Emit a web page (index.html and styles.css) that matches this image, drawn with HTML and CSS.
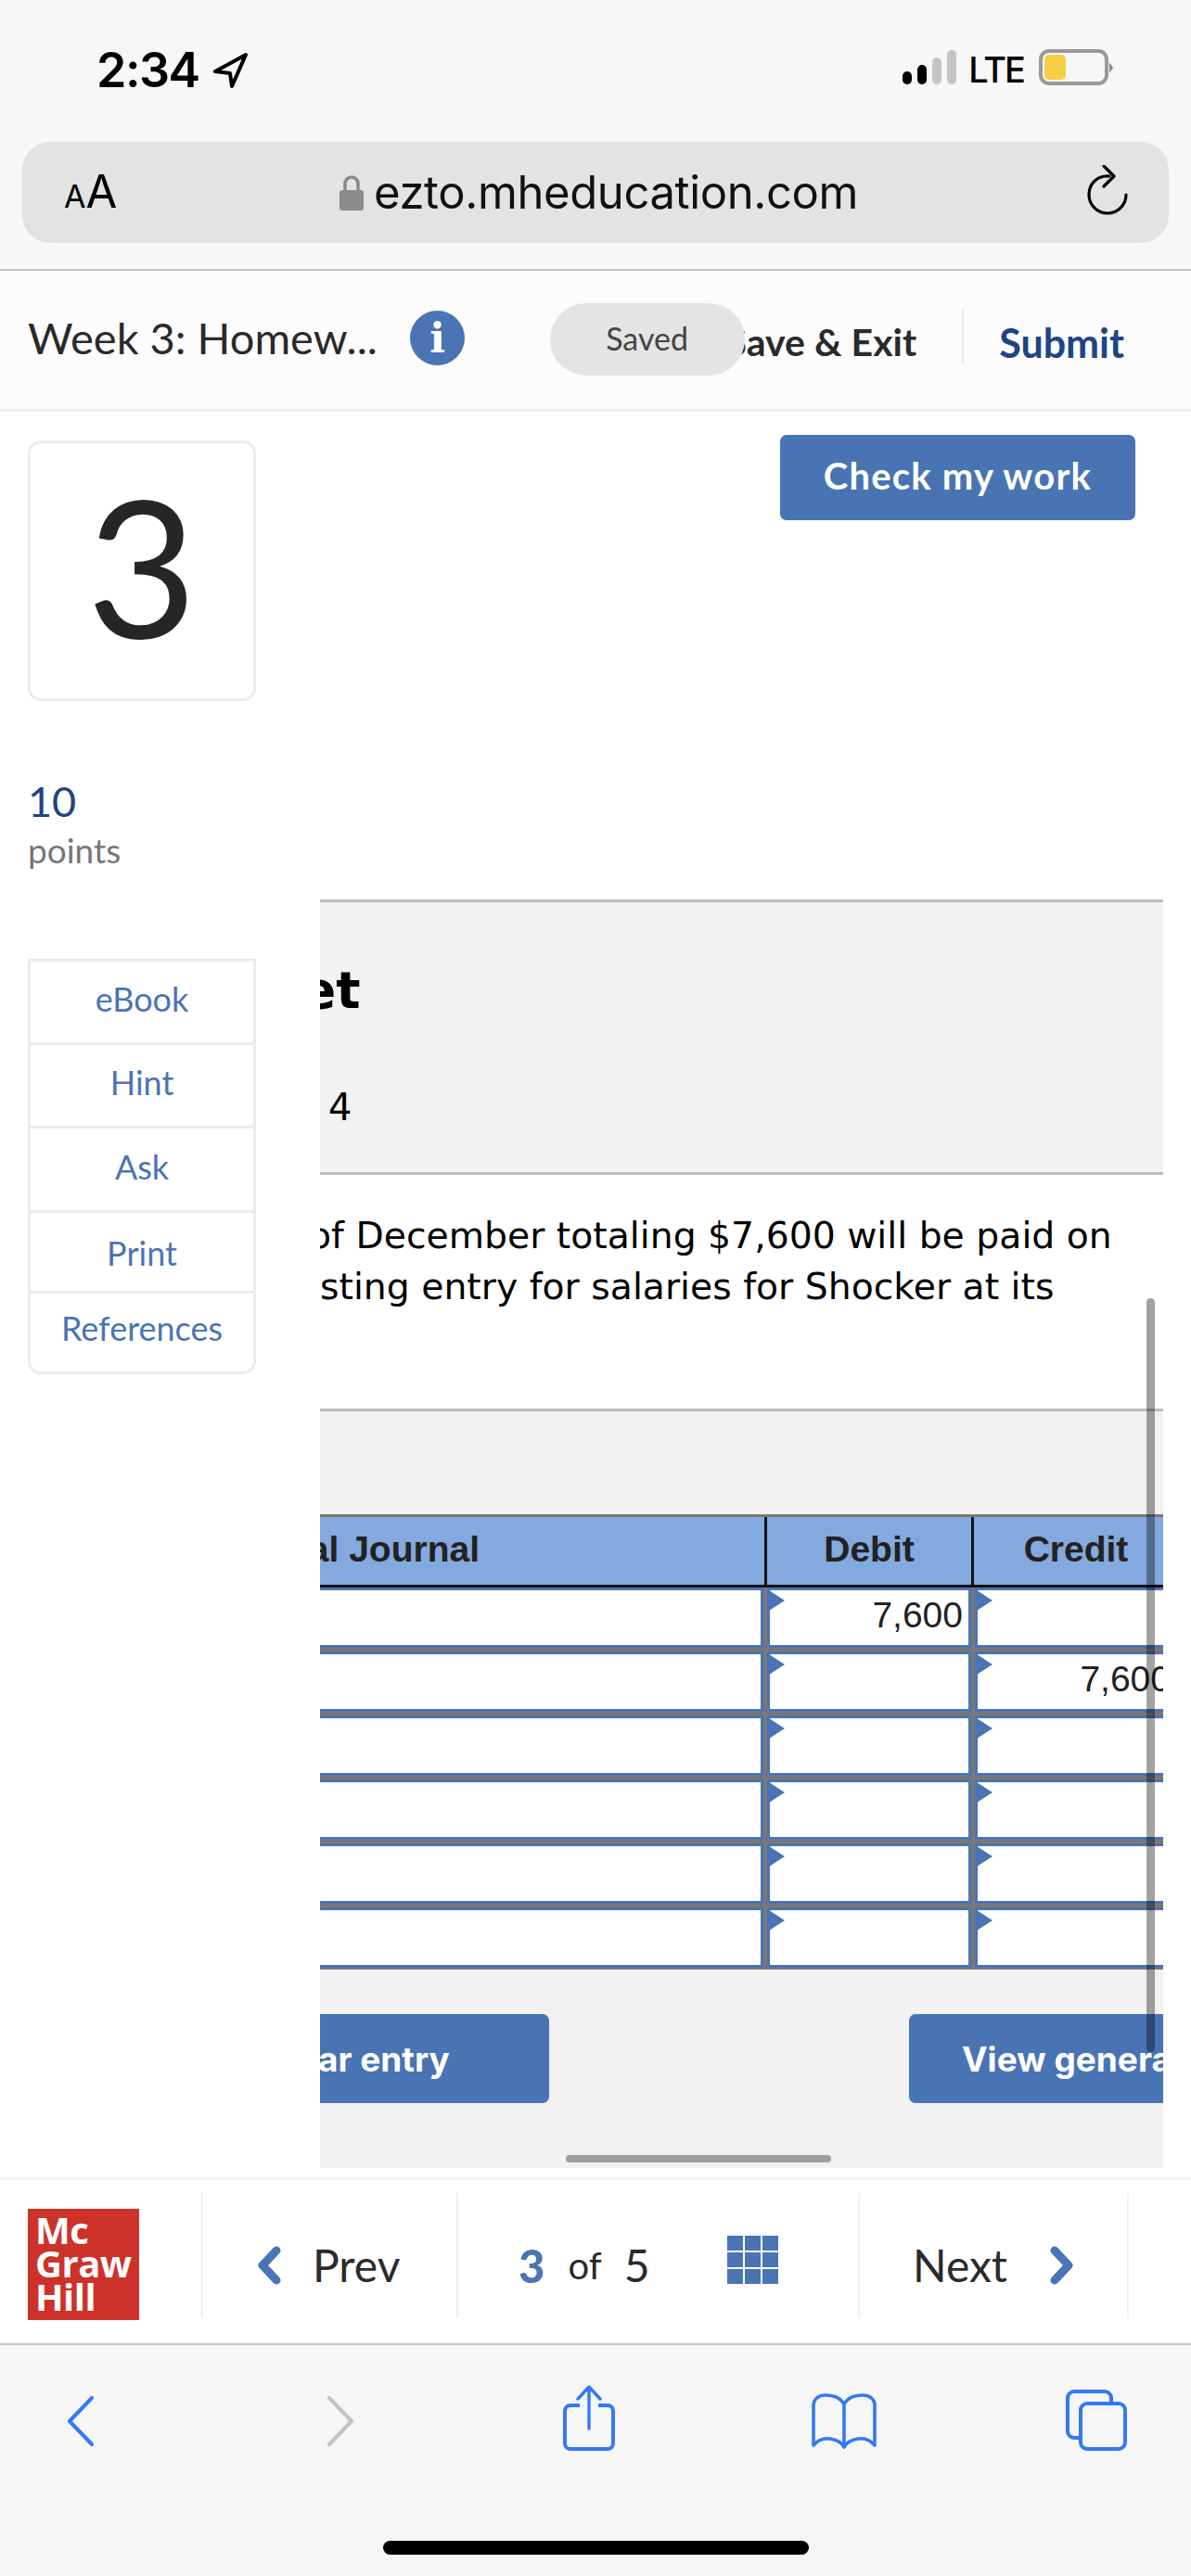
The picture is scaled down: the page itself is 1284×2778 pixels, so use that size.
FILE: index.html
```html
<!DOCTYPE html>
<html lang="en">
  <head>
    <meta charset="UTF-8" />
    <meta name="viewport" content="width=device-width, initial-scale=1.0" />
    <title>Week 3: Homework</title>
    <link rel="stylesheet" href="styles.css">
  </head>
  <body>
    <!-- Safari top -->
    <div class="browser-top">
      <div class="status-bar">
        <div class="clock">
          <span>2:34</span>
          <svg class="arrow" viewBox="0 0 40 40"><path d="M36 3 L3 21 L19 23 L21 37 Z" fill="none" stroke="#000" stroke-width="4" stroke-linejoin="round"/></svg>
        </div>
        <div class="status-right">
          <div class="signal">
            <i class="bar bar-on h1"></i>
            <i class="bar bar-on h2"></i>
            <i class="bar h3"></i>
            <i class="bar h4"></i>
          </div>
          <span class="lte">LTE</span>
          <div class="battery"><i class="battery-fill"></i></div>
          <i class="battery-nub"></i>
        </div>
      </div>
      <div class="address-bar">
        <span class="aa"><small>A</small>A</span>
        <div class="url">
          <svg class="lock" viewBox="0 0 26 38"><path d="M6 18 V9 a7 7 0 0 1 14 0 V18" fill="none" stroke="#8a8a8c" stroke-width="3.5"/><rect x="0" y="16" width="26" height="22" rx="3" fill="#8a8a8c"/></svg>
          <span>ezto.mheducation.com</span>
        </div>
        <svg class="reload" viewBox="0 0 44 54"><path d="M24 12 C10 11 2 21 2 32 C2 43 11 52 22 52 C33 52 42 43 42 32" fill="none" stroke="#000" stroke-width="3.2" stroke-linecap="round"/><path d="M18 1 L29 12 L18 23" fill="none" stroke="#000" stroke-width="3.2" stroke-linecap="round" stroke-linejoin="round"/></svg>
      </div>
    </div>

    <!-- assignment header -->
    <header class="top-bar">
      <div class="title">Week 3: Homew...</div>
      <div class="info-dot">i</div>
      <div class="top-actions">
        <div class="save-wrap">
          <span class="save-exit">Save &amp; Exit</span>
          <span class="saved">Saved</span>
        </div>
        <span class="submit">Submit</span>
      </div>
    </header>

    <div class="page">
      <aside class="side">
        <div class="question-no">3</div>
        <div class="points-no">10</div>
        <div class="points-label">points</div>
        <ul class="side-menu">
          <li class="m-ebook">eBook</li>
          <li class="m-hint">Hint</li>
          <li class="m-ask">Ask</li>
          <li class="m-print">Print</li>
          <li class="m-refs">References</li>
        </ul>
      </aside>

      <main class="content">
        <div class="check-row">
          <button class="btn check-btn">Check my work</button>
        </div>

        <section class="panel-head">
          <h2>et</h2>
          <p>4</p>
        </section>

        <section class="question">
          <p class="line-one">of December totaling $7,600 will be paid on</p>
          <p class="line-two">sting entry for salaries for Shocker at its</p>
        </section>

        <section class="panel-work">
          <div class="work-inner">
            <div class="journal-head">
              <div class="jh jh-first">General Journal</div>
              <div class="jh">Debit</div>
              <div class="jh">Credit</div>
            </div>
            <div class="journal">
              <div class="cell"></div><div class="cell num">7,600</div><div class="cell num"></div>
              <div class="cell"></div><div class="cell num"></div><div class="cell num">7,600</div>
              <div class="cell"></div><div class="cell num"></div><div class="cell num"></div>
              <div class="cell"></div><div class="cell num"></div><div class="cell num"></div>
              <div class="cell"></div><div class="cell num"></div><div class="cell num"></div>
              <div class="cell"></div><div class="cell num"></div><div class="cell num"></div>
            </div>
            <div class="work-buttons">
              <button class="btn clear-btn">Clear entry</button>
              <button class="btn view-btn">View general journal</button>
            </div>
          </div>
          <div class="scroll-x"></div>
        </section>
        <div class="scroll-y"></div>
      </main>
    </div>

    <footer class="pager">
      <div class="logo">Mc<br>Graw<br>Hill</div>
      <div class="pager-item prev">
        <svg class="chev" viewBox="0 0 28 42"><path d="M22 5 L7 21 L22 37" fill="none" stroke="#4a74b4" stroke-width="9" stroke-linecap="round" stroke-linejoin="round"/></svg>
        <span>Prev</span>
      </div>
      <div class="pager-item pages">
        <b>3</b><span class="of">of</span><span class="total">5</span>
        <div class="grid-icon">
          <i></i><i></i><i></i><i></i><i></i><i></i><i></i><i></i><i></i>
        </div>
      </div>
      <div class="pager-item next">
        <span>Next</span>
        <svg class="chev" viewBox="0 0 28 42"><path d="M6 5 L21 21 L6 37" fill="none" stroke="#4a74b4" stroke-width="9" stroke-linecap="round" stroke-linejoin="round"/></svg>
      </div>
    </footer>

    <!-- Safari bottom -->
    <nav class="toolbar">
      <div class="tools">
        <svg class="tool t-back" viewBox="0 0 30 54"><path d="M27 2 L3 27 L27 52" fill="none" stroke="#3478f6" stroke-width="4" stroke-linecap="round" stroke-linejoin="round"/></svg>
        <svg class="tool t-fwd" viewBox="0 0 30 54"><path d="M3 2 L27 27 L3 52" fill="none" stroke="#c2c2c4" stroke-width="4" stroke-linecap="round" stroke-linejoin="round"/></svg>
        <svg class="tool t-share" viewBox="0 0 56 72"><path d="M18 22 H8 a6 6 0 0 0 -6 6 V63 a6 6 0 0 0 6 6 H48 a6 6 0 0 0 6 -6 V28 a6 6 0 0 0 -6 -6 H38" fill="none" stroke="#3478f6" stroke-width="4"/><path d="M28 47 V3 M16 15 L28 2 L40 15" fill="none" stroke="#3478f6" stroke-width="3.4" stroke-linecap="round" stroke-linejoin="round"/></svg>
        <svg class="tool t-book" viewBox="0 0 70 60"><path d="M35 12 C31 4 24 2 15 2 C8 2 2 6 2 13 V56 C8 49 14 48 20 49 C27 50 32 53 35 58 C38 53 43 50 50 49 C56 48 62 49 68 56 V13 C68 6 62 2 55 2 C46 2 39 4 35 12 Z M35 12 V56" fill="none" stroke="#3478f6" stroke-width="3.6" stroke-linejoin="round"/></svg>
        <svg class="tool t-tabs" viewBox="0 0 66 66"><path d="M16 52 H9 a7 7 0 0 1 -7 -7 V9 a7 7 0 0 1 7 -7 H42 a7 7 0 0 1 7 7 V15" fill="none" stroke="#3478f6" stroke-width="4"/><rect x="16" y="15" width="48" height="49" rx="7" fill="none" stroke="#3478f6" stroke-width="4"/></svg>
      </div>
      <div class="home-bar"></div>
    </nav>
  </body>
</html>
```

FILE: styles.css
```css
* {
  margin: 0;
  padding: 0;
  box-sizing: border-box;
}

body {
  width: 1284px;
  height: 2778px;
  overflow: hidden;
  background: #fff;
  font-family: Lato, "Open Sans", sans-serif;
  color: #222;
}

button {
  border: none;
  font-family: Inter, sans-serif;
}

/* browser chrome */
.browser-top {
  height: 292px;
  background: #f7f7f7;
  border-bottom: 2px solid #c4c4c6;
}

.status-bar {
  height: 153px;
  padding: 45px 0 0 104px;
  display: flex;
  align-items: flex-start;
  justify-content: space-between;
}

.clock {
  display: flex;
  align-items: center;
  gap: 14px;
  font-family: Inter, sans-serif;
  font-size: 52px;
  line-height: 62px;
  font-weight: 600;
  letter-spacing: -1.5px;
  color: #000;
}

.arrow {
  width: 40px;
  height: 40px;
}

.status-right {
  display: flex;
  align-items: flex-end;
  height: 47px;
  padding-right: 84px;
}

.signal {
  display: flex;
  align-items: flex-end;
  gap: 6px;
  margin-right: 13px;
  margin-bottom: 1px;
}

.bar {
  display: block;
  width: 10px;
  border-radius: 5px;
  background: #c4c4c4;
}

.bar-on {
  background: #000;
}

.h1 { height: 14px; }
.h2 { height: 21px; }
.h3 { height: 29px; }
.h4 { height: 37px; }

.lte {
  font-family: Inter, sans-serif;
  font-size: 38px;
  line-height: 40px;
  font-weight: 500;
  letter-spacing: -2px;
  color: #000;
  margin-right: 16px;
  margin-bottom: -3px;
}

.battery {
  width: 75px;
  height: 39px;
  border: 4px solid #999;
  border-radius: 11px;
  padding: 2px;
}

.battery-fill {
  display: block;
  width: 23px;
  height: 100%;
  border-radius: 5px;
  background: #f6cf45;
}

.battery-nub {
  width: 0;
  height: 0;
  margin: 0 0 13px 1px;
  border-left: 4px solid #888;
  border-top: 6px solid transparent;
  border-bottom: 6px solid transparent;
}

.address-bar {
  margin: 0 24px;
  height: 109px;
  border-radius: 30px;
  background: #e3e3e3;
  display: flex;
  align-items: center;
  padding: 0 44px 0 45px;
}

.aa {
  width: 297px;
  margin-top: 4px;
  font-family: Inter, sans-serif;
  font-size: 49px;
  color: #000;
  line-height: 60px;
}

.aa small {
  font-size: 34px;
}

.url {
  display: flex;
  align-items: center;
  gap: 11px;
  font-family: Inter, sans-serif;
  font-size: 49px;
  letter-spacing: -0.4px;
  color: #111;
}

.lock {
  width: 26px;
  height: 38px;
}

.reload {
  width: 44px;
  height: 54px;
  margin-left: auto;
  margin-top: -6px;
}

/* assignment header */
.top-bar {
  height: 152px;
  background: #fcfcfc;
  border-bottom: 3px solid #f2f2f2;
  display: flex;
  align-items: center;
  padding: 0 0 5px 30px;
}

.title {
  font-size: 47px;
  width: 412px;
  color: #2a2a2a;
  white-space: nowrap;
}

.info-dot {
  width: 59px;
  height: 59px;
  border-radius: 50%;
  background: #4a74b4;
  color: #fff;
  font-family: "DejaVu Serif", serif;
  font-weight: 700;
  font-size: 44px;
  line-height: 59px;
  text-align: center;
}

.top-actions {
  display: flex;
  align-items: center;
  margin-left: auto;
  padding-right: 72px;
}

.save-wrap {
  position: relative;
  padding-right: 49px;
  border-right: 2px solid #eaeaea;
  height: 60px;
  display: flex;
  align-items: center;
}

.save-exit {
  font-size: 41px;
  font-weight: 700;
  margin-top: 8px;
  white-space: nowrap;
  color: #2a2a2a;
}

.saved {
  position: absolute;
  left: -190px;
  top: -7px;
  width: 210px;
  height: 78px;
  border-radius: 39px;
  background: #e4e4e6;
  font-size: 34px;
  line-height: 76px;
  text-align: center;
  color: #444;
}

.submit {
  margin-left: 38px;
  font-size: 43px;
  font-weight: 700;
  margin-top: 10px;
  color: #1f4483;
}

/* two columns */
.page {
  display: flex;
  height: 1904px;
  padding-left: 30px;
}

.side {
  width: 246px;
  padding-top: 31px;
  flex-shrink: 0;
}

.question-no {
  height: 281px;
  border: 3px solid #ececec;
  border-radius: 14px;
  font-size: 205px;
  line-height: 262px;
  text-align: center;
  color: #262626;
}

.points-no {
  margin-top: 82px;
  font-size: 45px;
  line-height: 52px;
  color: #1f4483;
}

.points-label {
  margin-top: 2px;
  font-size: 37px;
  line-height: 50px;
  color: #777;
}

.side-menu {
  list-style: none;
  margin-top: 92px;
  border: 3px solid #ececec;
  border-radius: 0 0 14px 14px;
}

.side-menu li {
  text-align: center;
  font-size: 36px;
  color: #4a74b4;
  border-bottom: 3px solid #ececec;
}

.side-menu li:last-child {
  border-bottom: none;
}

.m-ebook { height: 90px; line-height: 81px; }
.m-hint { height: 90px; line-height: 81px; }
.m-ask { height: 91px; line-height: 83px; }
.m-print { height: 87px; line-height: 87px; }
.m-refs { height: 84px; line-height: 75px; }

.content {
  position: relative;
  width: 909px;
  margin-left: 69px;
}

.btn {
  background: #4874b3;
  color: #fff;
  border-radius: 7px;
  font-weight: 700;
}

.check-row {
  height: 526px;
  padding: 25px 30px 0 0;
  display: flex;
  justify-content: flex-end;
  align-items: flex-start;
}

.check-btn {
  width: 383px;
  height: 92px;
  padding-bottom: 5px;
  font-family: Lato, sans-serif;
  font-size: 40px;
  letter-spacing: 1.2px;
}

.panel-head {
  height: 297px;
  background: #f2f2f2;
  border-top: 3px solid #bbb;
  border-bottom: 3px solid #bbb;
  overflow: hidden;
  font-family: "DejaVu Sans", sans-serif;
  color: #000;
}

.panel-head h2 {
  font-size: 55px;
  line-height: 66px;
  margin: 62px 0 0 -20px;
}

.panel-head p {
  font-size: 40px;
  line-height: 50px;
  margin: 68px 0 0 9px;
}

.question {
  height: 252px;
  overflow: hidden;
  font-family: "DejaVu Sans", sans-serif;
  font-size: 39.35px;
  line-height: 55px;
  color: #000;
  padding-top: 38px;
  white-space: nowrap;
}

.line-one {
  margin-left: -12px;
}

.panel-work {
  position: relative;
  height: 819px;
  background: #f2f2f2;
  border-top: 3px solid #bbb;
  overflow: hidden;
}

.work-inner {
  width: 1400px;
  margin-left: -200px;
  padding-top: 111px;
  font-family: "Liberation Sans", sans-serif;
}

.journal-head {
  width: 1126px;
  display: grid;
  grid-template-columns: 679px 220px 220px;
  gap: 3px;
  background: #111;
  border-top: 3px solid #777;
  padding-bottom: 3px;
}

.jh {
  height: 73px;
  background: #83a9df;
  font-weight: 700;
  font-size: 39px;
  line-height: 70px;
  color: #222;
  text-align: center;
}

.jh-first {
  text-align: right;
  padding-right: 307px;
}

.journal {
  width: 1126px;
  display: grid;
  grid-template-columns: 678px 220px 220px;
  grid-auto-rows: 65px;
  gap: 4px;
  padding-bottom: 2px;
  background: #777;
}

.cell {
  position: relative;
  background: #fff;
  border: 3px solid #4a74b4;
  font-size: 39px;
  line-height: 53px;
  color: #222;
}

.num {
  text-align: right;
  padding-right: 6px;
}

/* little flag in the corner of an entry cell */
.num::before {
  content: "";
  position: absolute;
  left: -1px;
  top: 0;
  border-left: 17px solid #4a74b4;
  border-top: 11px solid transparent;
  border-bottom: 11px solid transparent;
}

.work-buttons {
  display: flex;
  margin: 48px 0 0 31px;
  gap: 388px;
}

.work-buttons .btn {
  height: 96px;
  font-size: 37px;
  white-space: nowrap;
}

.clear-btn {
  width: 416px;
}

.view-btn {
  padding: 0 57px;
}

.scroll-x {
  position: absolute;
  left: 265px;
  top: 802px;
  width: 286px;
  height: 8px;
  border-radius: 4px;
  background: #9f9f9f;
}

.scroll-y {
  position: absolute;
  right: 9px;
  top: 956px;
  width: 9px;
  height: 813px;
  border-radius: 5px;
  background: rgba(0, 0, 0, 0.36);
}

/* bottom pager */
.pager {
  height: 181px;
  border-top: 3px solid #f2f2f2;
  border-bottom: 2px solid #c4c4c6;
  background: #fff;
  display: flex;
  align-items: flex-start;
  padding: 14px 0 0 30px;
}

.logo {
  width: 120px;
  height: 120px;
  margin-top: 17px;
  margin-right: 67px;
  background: #cc3229;
  color: #fff;
  font-family: "Open Sans", sans-serif;
  font-weight: 700;
  font-size: 40px;
  line-height: 36px;
  letter-spacing: -0.5px;
  padding: 5px 0 0 8px;
}

.pager-item {
  height: 135px;
  border-left: 2px solid #f0f0f0;
  display: flex;
  align-items: center;
  font-size: 48px;
  color: #2a2a2a;
  padding-top: 20px;
}

.prev {
  width: 275px;
  padding-left: 57px;
  gap: 33px;
}

.pages {
  width: 433px;
  padding-left: 65px;
}

.pages b {
  color: #4a74b4;
  font-size: 49px;
  font-weight: 900;
}

.of {
  margin-left: 25px;
  font-size: 40px;
}

.total {
  margin-left: 24px;
}

.grid-icon {
  display: grid;
  grid-template-columns: repeat(3, 17px);
  grid-auto-rows: 16px;
  gap: 2px;
  margin-left: 83px;
  margin-top: -12px;
}

.grid-icon i {
  background: #4a74b4;
}

.next {
  width: 292px;
  padding-left: 57px;
  gap: 45px;
  border-right: 2px solid #f0f0f0;
}

.chev {
  width: 28px;
  height: 42px;
}

.toolbar {
  height: 250px;
  background: #f6f6f6;
}

.tools {
  position: relative;
  height: 211px;
}

/* toolbar glyphs sit at fixed spots on the bar */
.tool {
  position: absolute;
}

.t-back { left: 72px; top: 55px; width: 30px; height: 54px; }
.t-fwd { left: 352px; top: 55px; width: 30px; height: 54px; }
.t-share { left: 607px; top: 43px; width: 56px; height: 72px; }
.t-book { left: 875px; top: 52px; width: 70px; height: 60px; }
.t-tabs { left: 1149px; top: 48px; width: 66px; height: 66px; }

.home-bar {
  width: 459px;
  height: 15px;
  margin: 0 auto;
  border-radius: 8px;
  background: #000;
}
```
